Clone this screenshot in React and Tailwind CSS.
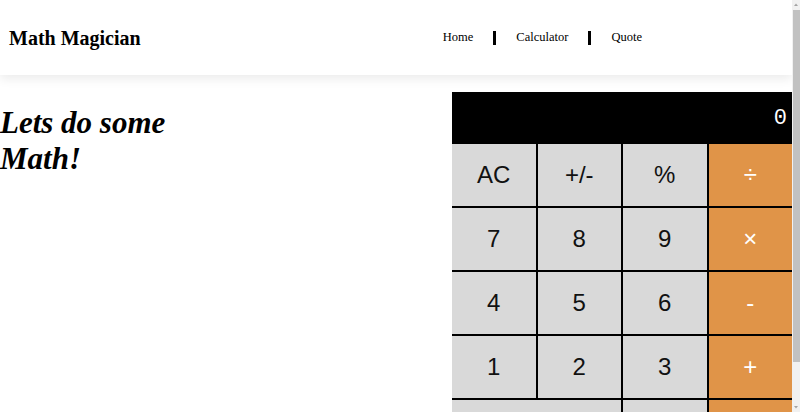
const rows = [
  ['AC', '+/-', '%', '÷'],
  ['7', '8', '9', '×'],
  ['4', '5', '6', '-'],
  ['1', '2', '3', '+'],
];

function Key({ label, op, wide }) {
  return (
    <button
      type="button"
      className={`h-[62px] text-2xl ${wide ? 'col-span-2' : ''} ${
        op ? 'bg-[#e09448] text-white' : 'bg-[#d9d9d9] text-[#111]'
      }`}
    >
      {label}
    </button>
  );
}

// page scrollbar as seen in the screenshot
function ScrollBar() {
  return (
    <div className="fixed top-0 right-0 flex h-screen w-[8px] flex-col items-center bg-[#f1f1f1]">
      <svg width="6" height="10" viewBox="0 0 6 10" className="shrink-0">
        <path d="M1 6 L3 3.5 L5 6 Z" fill="#a3a3a3" />
      </svg>
      <div className="h-[352px] w-[7px] bg-[#c1c1c1]" />
      <div className="flex-1" />
      <svg width="6" height="10" viewBox="0 0 6 10" className="shrink-0">
        <path d="M1 4 L3 6.5 L5 4 Z" fill="#a3a3a3" />
      </svg>
    </div>
  );
}

export default function App() {
  return (
    <div className="min-h-screen bg-white text-black font-['Liberation_Serif',serif]">
      <div className="mr-[8px]">
        <header className="flex h-[75px] items-center bg-white pl-[9px] shadow-[0_4px_10px_rgba(0,0,0,0.08)]">
          <h1 className="text-[20px] font-bold">Math Magician</h1>
          <nav className="ml-auto mr-[150px] flex items-center text-[12.5px]">
            <a href="#" className="pr-[20px]">Home</a>
            <span className="h-[14px] w-[3px] bg-black" />
            <a href="#" className="px-[20px]">Calculator</a>
            <span className="h-[14px] w-[3px] bg-black" />
            <a href="#" className="pl-[20px]">Quote</a>
          </nav>
        </header>

        <main className="flex justify-between pt-[17px]">
          <h2 className="mt-[13px] w-[200px] text-[31px] leading-9 font-bold italic">
            Lets do some Math!
          </h2>

          <div className="w-[340px] font-['Liberation_Sans',Arial,sans-serif]">
            <div className="flex h-[52px] items-center justify-end bg-black pr-[5px] font-['Liberation_Mono',monospace] text-[22px] text-white">
              0
            </div>
            <div className="grid grid-cols-4 gap-[2px] bg-black">
              {rows.map((row) =>
                row.map((k, i) => <Key key={k} label={k} op={i === 3} />)
              )}
              <Key label="0" wide />
              <Key label="." />
              <Key label="=" op />
            </div>
          </div>
        </main>
      </div>
      <ScrollBar />
    </div>
  );
}
